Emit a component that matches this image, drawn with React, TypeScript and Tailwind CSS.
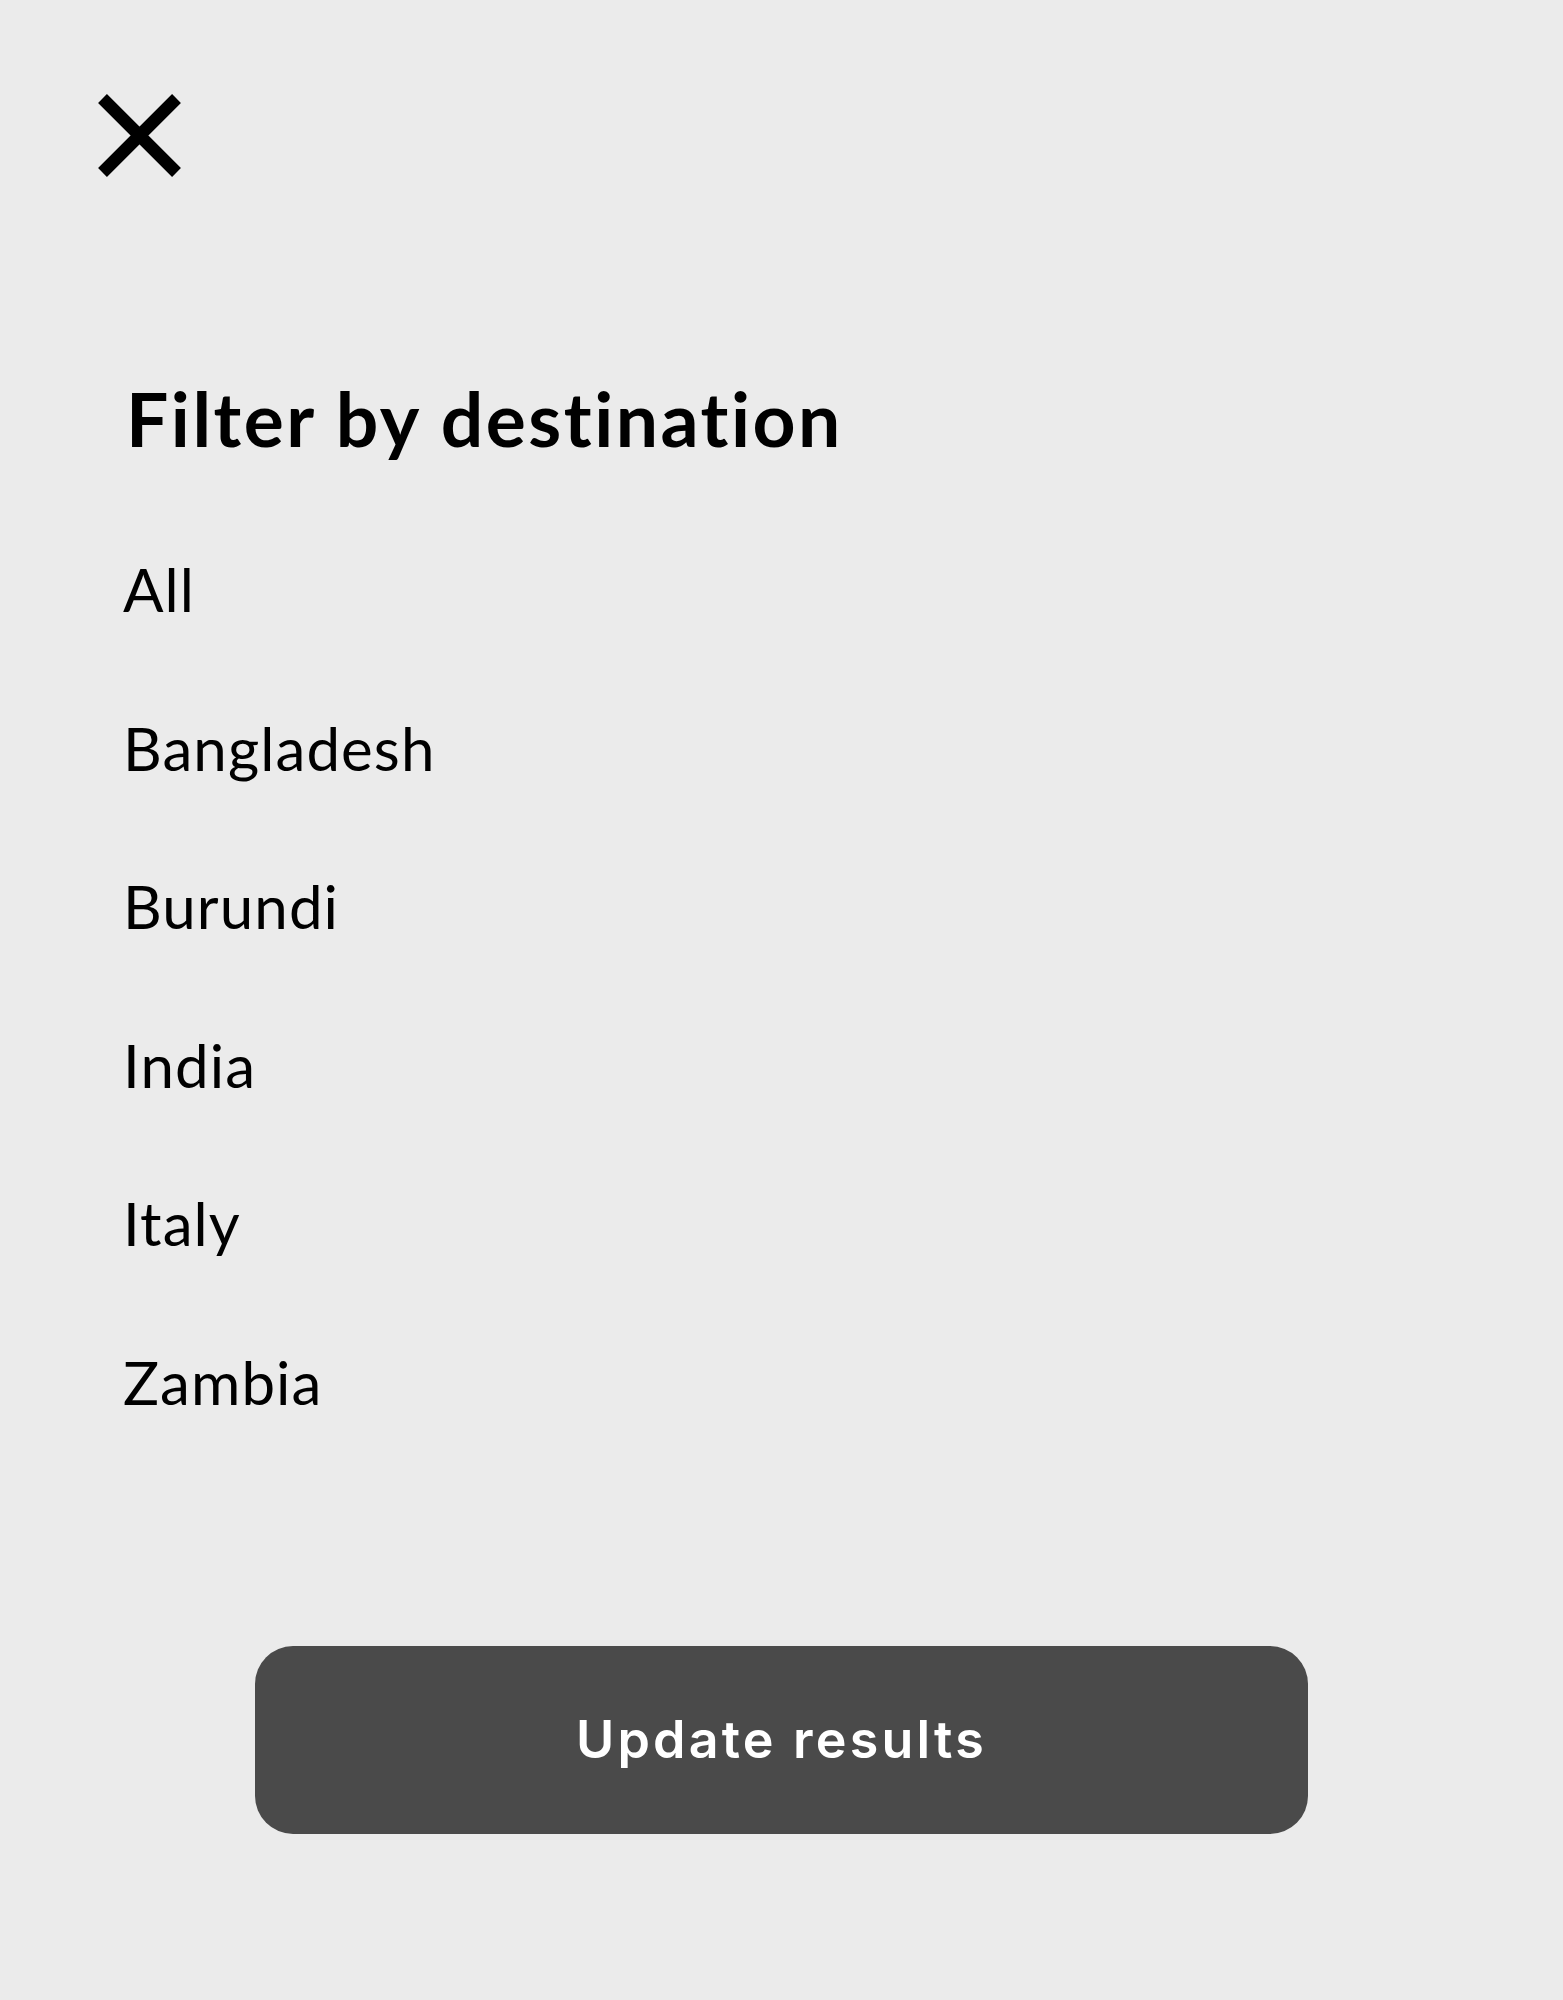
import { useState } from 'react';

const destinations = ['All', 'Bangladesh', 'Burundi', 'India', 'Italy', 'Zambia'];

const CloseIcon = () => (
  <svg width="83" height="83" viewBox="0 0 83 83" fill="none">
    <path d="M4.5 4.5 L78.5 78.5 M78.5 4.5 L4.5 78.5" stroke="#000" strokeWidth="12.5" strokeLinecap="butt" />
  </svg>
);

export default function App() {
  const [selected, setSelected] = useState('All');

  return (
    <div className="min-h-[2000px] bg-[#ebebeb] font-['Lato','Liberation_Sans',sans-serif] text-black">
      <div className="pl-[98px] pt-[94px]">
        <button type="button" aria-label="Close" className="block">
          <CloseIcon />
        </button>
      </div>

      <div className="pl-[123px]">
        <h2 className="mt-[204px] pl-[3px] text-[75px] font-bold leading-none tracking-[2.5px]">
          Filter by destination
        </h2>

        <ul className="mt-[103px] flex flex-col gap-[98.5px]">
          {destinations.map((d) => (
            <li key={d}>
              <button
                type="button"
                onClick={() => setSelected(d)}
                className={`text-[60px] leading-none tracking-[1.1px] ${selected === d ? 'text-black' : 'text-black'}`}
              >
                {d}
              </button>
            </li>
          ))}
        </ul>
      </div>

      <div className="mt-[234px] flex justify-center">
        <button
          type="button"
          className="flex h-[188px] w-[1053px] items-center justify-center rounded-[38px] bg-[#4a4a4a] font-['Inter','Lato',sans-serif] text-[52px] font-semibold tracking-[3.2px] text-white"
        >
          Update results
        </button>
      </div>
    </div>
  );
}
